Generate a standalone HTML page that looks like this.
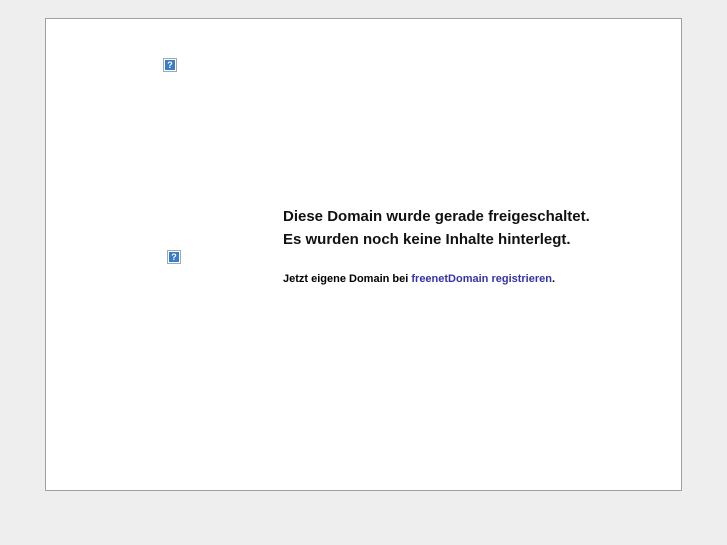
<!DOCTYPE html>
<html><head><style>
html,body{margin:0;padding:0;background:#eeeeee;width:727px;height:545px;overflow:hidden;font-family:"Liberation Sans",sans-serif}
#box{position:absolute;left:45px;top:18px;width:635px;height:471px;background:#fff;border:1px solid #a0a0a0}
.ic{position:absolute;width:12px;height:12px;background:#fff;border:1px solid #9ab}
.ic span{position:absolute;left:1px;top:1px;width:10px;height:10px;background:#3a7cc8;color:#fff;font:bold 9px/10px "Liberation Sans",sans-serif;text-align:center}
.t{position:absolute;left:283px;color:#111;font-size:15px;font-weight:bold;white-space:nowrap}
.s{position:absolute;left:283px;top:273px;font-size:11px;font-weight:bold;white-space:nowrap}
.s a{color:#3333aa;text-decoration:none}
</style></head><body>
<div id="box"></div>
<div class="ic" style="left:163px;top:58px"><span>?</span></div>
<div class="ic" style="left:167px;top:250px"><span>?</span></div>
<div class="t" style="top:208px">Diese Domain wurde gerade freigeschaltet.</div>
<div class="t" style="top:231px">Es wurden noch keine Inhalte hinterlegt.</div>
<div class="s">Jetzt eigene Domain bei <a>freenetDomain registrieren</a>.</div>
</body></html>
